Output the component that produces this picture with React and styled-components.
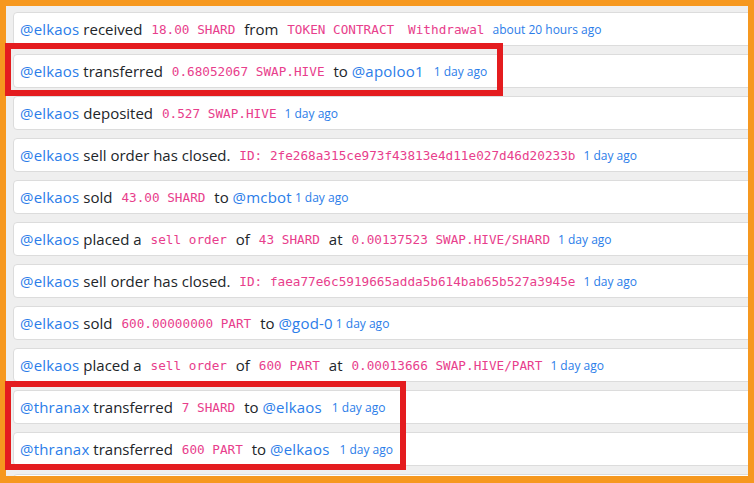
import React from 'react';
import styled, { createGlobalStyle } from 'styled-components';

const Global = createGlobalStyle`
  html, body {
    margin: 0;
    padding: 0;
  }
  body {
    font-family: "Open Sans", "Noto Sans", sans-serif;
    background: #fff;
  }
`;

const Frame = styled.div`
  position: relative;
  width: 754px;
  height: 483px;
  box-sizing: border-box;
  background: #f6981f;
  padding: 6px 6px 7px 6px;
`;

const Feed = styled.div`
  height: 100%;
  background: #efefef;
  overflow: hidden;
  padding: 6px 0 0 7px;
  box-sizing: border-box;
`;

const List = styled.div`
  display: flex;
  flex-direction: column;
  gap: 8px;
`;

const Card = styled.div`
  width: 780px;
  height: 34px;
  flex-shrink: 0;
  box-sizing: border-box;
  display: flex;
  align-items: center;
  padding: 0 6px;
  background: #fff;
  border: 1px solid #dcdcdc;
  border-radius: 4px;
  font-size: 15px;
  color: #212529;
  white-space: pre;
`;

const User = styled.span`
  color: #2b7de9;
  letter-spacing: 0.2px;
`;

const Code = styled.code`
  font-family: "DejaVu Sans Mono", "Liberation Mono", monospace;
  font-size: 12.7px;
  color: #e83e8c;
  padding: 0 5px;
`;

const Time = styled.span`
  color: #2b7de9;
  font-size: 12px;
  margin-left: ${p => (p.$wide ? '10px' : '3px')};
`;

const Mark = styled.div`
  position: absolute;
  left: 5px;
  top: ${p => p.$top}px;
  width: ${p => p.$w}px;
  height: ${p => p.$h}px;
  box-sizing: border-box;
  border: 6px solid #e41c1f;
  pointer-events: none;
`;

const rows = [
  [['u', '@elkaos'], ['t', ' received '], ['c', '18.00 SHARD'], ['t', ' from '], ['c', 'TOKEN CONTRACT'], ['t', ' '], ['c', 'Withdrawal'], ['time', 'about 20 hours ago']],
  [['u', '@elkaos'], ['t', ' transferred '], ['c', '0.68052067 SWAP.HIVE'], ['t', ' to '], ['u', '@apoloo1'], ['wide', '1 day ago']],
  [['u', '@elkaos'], ['t', ' deposited '], ['c', '0.527 SWAP.HIVE'], ['time', '1 day ago']],
  [['u', '@elkaos'], ['t', ' sell order has closed. '], ['c', 'ID: 2fe268a315ce973f43813e4d11e027d46d20233b'], ['time', '1 day ago']],
  [['u', '@elkaos'], ['t', ' sold '], ['c', '43.00 SHARD'], ['t', ' to '], ['u', '@mcbot'], ['time', '1 day ago']],
  [['u', '@elkaos'], ['t', ' placed a '], ['c', 'sell order'], ['t', ' of '], ['c', '43 SHARD'], ['t', ' at '], ['c', '0.00137523 SWAP.HIVE/SHARD'], ['time', '1 day ago']],
  [['u', '@elkaos'], ['t', ' sell order has closed. '], ['c', 'ID: faea77e6c5919665adda5b614bab65b527a3945e'], ['time', '1 day ago']],
  [['u', '@elkaos'], ['t', ' sold '], ['c', '600.00000000 PART'], ['t', ' to '], ['u', '@god-0'], ['time', '1 day ago']],
  [['u', '@elkaos'], ['t', ' placed a '], ['c', 'sell order'], ['t', ' of '], ['c', '600 PART'], ['t', ' at '], ['c', '0.00013666 SWAP.HIVE/PART'], ['time', '1 day ago']],
  [['u', '@thranax'], ['t', ' transferred '], ['c', '7 SHARD'], ['t', ' to '], ['u', '@elkaos'], ['wide', '1 day ago']],
  [['u', '@thranax'], ['t', ' transferred '], ['c', '600 PART'], ['t', ' to '], ['u', '@elkaos'], ['wide', '1 day ago']],
  [],
];

const Part = ({ kind, text }) => {
  if (kind === 'u') return <User>{text}</User>;
  if (kind === 'c') return <Code>{text}</Code>;
  if (kind === 'time') return <Time>{text}</Time>;
  if (kind === 'wide') return <Time $wide>{text}</Time>;
  return <span>{text}</span>;
};

export default function App() {
  return (
    <Frame>
      <Global />
      <Feed>
        <List>
          {rows.map((row, i) => (
            <Card key={i}>
              {row.map(([kind, text], j) => (
                <Part key={j} kind={kind} text={text} />
              ))}
            </Card>
          ))}
        </List>
      </Feed>
      <Mark $top={43} $w={498} $h={53} />
      <Mark $top={381} $w={401} $h={89} />
    </Frame>
  );
}
